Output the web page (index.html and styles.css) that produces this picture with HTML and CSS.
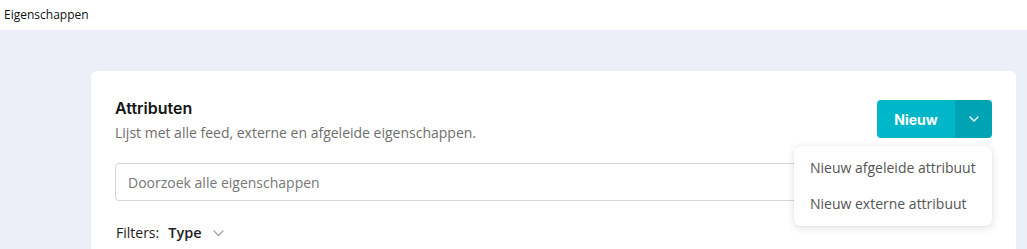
FILE: index.html
```html
<!DOCTYPE html>
<html lang="nl">
<head>
<meta charset="utf-8">
<title>Eigenschappen</title>
<link rel="stylesheet" href="styles.css">
</head>
<body>
<header class="topbar">Eigenschappen</header>
<main class="main">
  <section class="card">
    <div class="card-head">
      <div class="titles">
        <h1 class="title">Attributen</h1>
        <p class="subtitle">Lijst met alle feed, externe en afgeleide eigenschappen.</p>
      </div>
      <div class="split">
        <button class="split-main">Nieuw</button>
        <button class="split-toggle" aria-label="Meer">
          <svg width="10" height="6" viewBox="0 0 10 6"><path d="M1 1l4 4 4-4" fill="none" stroke="#fff" stroke-width="1.3" stroke-linecap="round" stroke-linejoin="round"/></svg>
        </button>
        <ul class="menu">
          <li class="menu-item">Nieuw afgeleide attribuut</li>
          <li class="menu-item">Nieuw externe attribuut</li>
        </ul>
      </div>
    </div>
    <input class="search" type="text" placeholder="Doorzoek alle eigenschappen">
    <div class="filters">
      <span class="filters-label">Filters:</span>
      <span class="filter">Type
        <svg width="11" height="7" viewBox="0 0 11 7"><path d="M1 1l4.5 4.5L10 1" fill="none" stroke="#9a9a9a" stroke-width="1.1" stroke-linecap="round" stroke-linejoin="round"/></svg>
      </span>
    </div>
  </section>
</main>
</body>
</html>
```

FILE: styles.css
```css
* { box-sizing: border-box; }
html, body { margin: 0; padding: 0; }
body {
  font-family: "Open Sans", "Liberation Sans", sans-serif;
  background: #eceff7;
  color: #222;
  height: 249px;
  overflow: hidden;
}
.topbar {
  height: 30px;
  background: #fff;
  font-size: 12px;
  line-height: 30px;
  padding-left: 4px;
  color: #111;
}
.main {
  padding: 41px 11px 0 91px;
}
.card {
  background: #fff;
  border-radius: 6px;
  padding: 26px 24px 40px 24px;
  min-height: 300px;
}
.card-head {
  display: flex;
  justify-content: space-between;
  align-items: flex-start;
}
.title {
  margin: 0;
  font-family: Inter, "Open Sans", sans-serif;
  font-weight: 600;
  font-size: 16px;
  line-height: 22px;
  color: #151515;
}
.subtitle {
  margin: 4px 0 0;
  font-size: 14px;
  line-height: 20px;
  color: #6e6e6e;
}
.split {
  position: relative;
  display: flex;
  margin-top: 3px;
}
.split button {
  border: 0;
  height: 38px;
  color: #fff;
  cursor: pointer;
  padding: 0;
}
.split-main {
  width: 78px;
  background: #00b7ca;
  border-radius: 4px 0 0 4px;
  font-family: Inter, "Open Sans", sans-serif;
  font-weight: 700;
  font-size: 14px;
}
.split-toggle {
  width: 37px;
  background: #00a3b4;
  border-radius: 0 4px 4px 0;
  display: flex;
  align-items: center;
  justify-content: center;
}
.menu {
  position: absolute;
  top: 46px;
  right: 0;
  width: 198px;
  margin: 0;
  padding: 4px 0;
  list-style: none;
  background: #fff;
  border-radius: 6px;
  box-shadow: 0 2px 8px rgba(0, 0, 0, 0.12), 0 0 1px rgba(0,0,0,0.15);
  z-index: 2;
}
.menu-item {
  height: 36px;
  line-height: 36px;
  padding-left: 16px;
  font-size: 14px;
  color: #555;
  white-space: nowrap;
}
.search {
  display: block;
  width: 100%;
  height: 38px;
  margin-top: 20px;
  border: 1px solid #d6d6d6;
  border-radius: 4px;
  padding: 0 12px;
  font-family: "Open Sans", sans-serif;
  font-size: 14px;
  color: #333;
  outline: none;
}
.search::placeholder { color: #777; }
.filters {
  margin-top: 22px;
  display: flex;
  align-items: center;
  gap: 9px;
  font-size: 14px;
  line-height: 20px;
  padding-left: 1px;
}
.filters-label { color: #222; }
.filter {
  display: inline-flex;
  align-items: center;
  gap: 11px;
  font-weight: 600;
  color: #222;
  font-size: 14.5px;
}
```
